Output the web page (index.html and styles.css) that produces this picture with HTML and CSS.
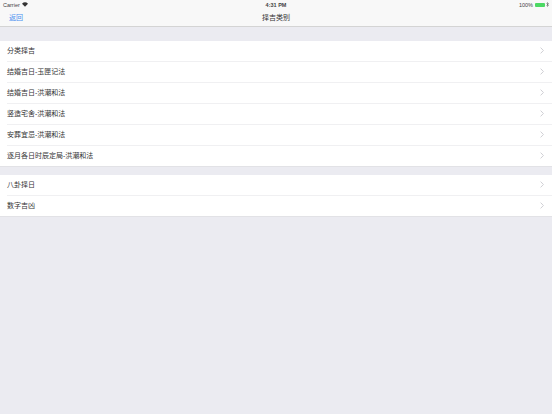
FILE: index.html
```html
<!DOCTYPE html>
<html lang="zh-CN">
  <head>
    <meta charset="UTF-8" />
    <title>择吉类别</title>
    <link rel="stylesheet" href="styles.css">
  </head>
  <body>
    <header class="top-bar">
      <div class="status-bar">
        <div class="status-left">
          <span>Carrier</span>
          <svg class="wifi" width="6" height="5" viewBox="0 0 14 10">
            <path d="M7 10 0 3Q7-3 14 3Z" fill="#333" />
          </svg>
        </div>
        <div class="status-time">4:31 PM</div>
        <div class="status-right">
          <span>100%</span>
          <span class="battery"><span class="battery-fill"></span></span>
          <svg width="3" height="5" viewBox="0 0 6 10">
            <path d="M1 2 5 7 3 9V1L5 3 1 8" fill="none" stroke="#555" stroke-width="1" />
          </svg>
        </div>
      </div>
      <nav class="nav-bar">
        <a class="nav-back">返回</a>
        <div class="nav-title">择吉类别</div>
      </nav>
    </header>

    <ul class="group group-first">
      <li class="row"><span>分类择吉</span><svg class="chevron" width="4" height="7" viewBox="0 0 4 7"><path d="M.6.6 3.4 3.5 .6 6.4" /></svg></li>
      <li class="row"><span>结婚吉日-玉匣记法</span><svg class="chevron" width="4" height="7" viewBox="0 0 4 7"><path d="M.6.6 3.4 3.5 .6 6.4" /></svg></li>
      <li class="row"><span>结婚吉日-洪潮和法</span><svg class="chevron" width="4" height="7" viewBox="0 0 4 7"><path d="M.6.6 3.4 3.5 .6 6.4" /></svg></li>
      <li class="row"><span>竖造宅舍-洪潮和法</span><svg class="chevron" width="4" height="7" viewBox="0 0 4 7"><path d="M.6.6 3.4 3.5 .6 6.4" /></svg></li>
      <li class="row"><span>安葬宜忌-洪潮和法</span><svg class="chevron" width="4" height="7" viewBox="0 0 4 7"><path d="M.6.6 3.4 3.5 .6 6.4" /></svg></li>
      <li class="row"><span>逐月各日时辰定局-洪潮和法</span><svg class="chevron" width="4" height="7" viewBox="0 0 4 7"><path d="M.6.6 3.4 3.5 .6 6.4" /></svg></li>
    </ul>

    <ul class="group">
      <li class="row"><span>八卦择日</span><svg class="chevron" width="4" height="7" viewBox="0 0 4 7"><path d="M.6.6 3.4 3.5 .6 6.4" /></svg></li>
      <li class="row"><span>数字吉凶</span><svg class="chevron" width="4" height="7" viewBox="0 0 4 7"><path d="M.6.6 3.4 3.5 .6 6.4" /></svg></li>
    </ul>
  </body>
</html>
```

FILE: styles.css
```css
body {
  margin: 0;
  height: 414px;
  overflow: hidden;
  background: #ebebf1;
  color: #333;
  font-family: "Liberation Sans", "Noto Sans CJK SC", sans-serif;
  font-size: 7px;
}
.top-bar {
  height: 26px;
  background: #f8f8f8;
  border-bottom: 1px solid #d4d4d4;
}
.status-bar {
  height: 9px;
  padding: 0 3px;
  display: grid;
  grid-template-columns: 1fr auto 1fr;
  align-items: center;
  font-size: 5.5px;
  color: #444;
}
.status-left {
  display: flex;
  align-items: center;
  gap: 2px;
}
.status-time {
  font-weight: 600;
}
.status-right {
  display: flex;
  align-items: center;
  justify-content: flex-end;
  gap: 1px;
}
.battery {
  width: 10px;
  height: 4px;
  margin-left: 1px;
  border-radius: 1px;
  display: flex;
}
.battery-fill {
  flex-grow: 1;
  border-radius: 1px;
  background: #4cd964;
}
.nav-bar {
  height: 15px;
  padding: 0 9px 2px;
  display: grid;
  grid-template-columns: 1fr auto 1fr;
  align-items: center;
}
.nav-back {
  color: #4a90f0;
}
.group {
  list-style: none;
  margin: 0 0 8px;
  padding: 0;
  background: #fff;
  border-bottom: 1px solid #e2e2e6;
}
.group-first {
  margin-top: 14px;
}
.row {
  height: 21px;
  box-sizing: border-box;
  margin-left: 7px;
  padding: 0 8px 2px 0;
  display: flex;
  justify-content: space-between;
  align-items: center;
  border-bottom: 1px solid #f0f0f2;
}
.row:last-child {
  height: 20px;
  border-bottom: none;
}
.chevron {
  fill: none;
  stroke: #cfcfd4;
  stroke-width: 1;
}
```
